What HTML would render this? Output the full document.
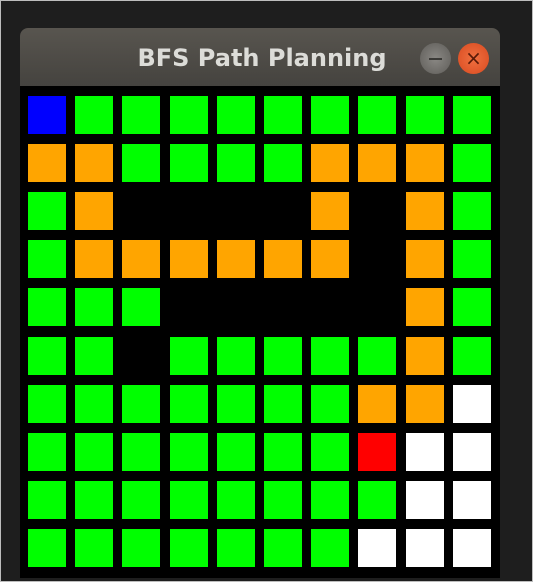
<html><head><style>
body{margin:0;width:533px;height:582px;background:#1e1e1e;position:relative;overflow:hidden;font-family:"DejaVu Sans","Liberation Sans",sans-serif}
.frame{position:absolute;left:0;top:0;width:531px;height:580px;border:1px solid #bdbdbd}
.win{position:absolute;left:20px;top:28px;width:480px;height:550px;background:#000;border-radius:8px 8px 0 0;overflow:hidden}
.tb{height:58px;background:linear-gradient(#58554f,#45433f);position:relative}
.t{position:absolute;left:2px;width:480px;text-align:center;top:16px;color:#dcdcd8;font-weight:bold;font-size:24px}
.b{position:absolute;top:15px;width:31px;height:31px;border-radius:50%}
.c{position:absolute;width:38px;height:38px}
</style></head><body>
<div class="frame"></div>
<div class="win"><div class="tb"><div class="t">BFS Path Planning</div>
<div class="b" style="left:400px;background:radial-gradient(#8a8884,#5e5c58)"><div style="position:absolute;left:9px;top:15px;width:13px;height:2px;background:#3a3936"></div></div>
<div class="b" style="left:438px;background:radial-gradient(#f07040,#d84a20);color:#5a1a08;font-size:20px;text-align:center;line-height:31px">×</div>
</div></div>
<div id="g"></div>
<script>
var m=["BGGGGGGGGG","OOGGGGOOOG","GOKKKKOKOG","GOOOOOOKOG","GGGKKKKKOG","GGKGGGGGOG","GGGGGGGOOW","GGGGGGGRWW","GGGGGGGGWW","GGGGGGGWWW"];
var col={B:"#0000ff",G:"#00ff00",O:"#ffa500",W:"#ffffff",R:"#ff0000",K:"#000"};
var h="";for(var r=0;r<10;r++)for(var c=0;c<10;c++){var k=m[r][c];if(k=="K")continue;
h+='<div class="c" style="left:'+Math.round(28+c*47.2)+'px;top:'+Math.round(96+r*48.1)+'px;background:'+col[k]+'"></div>';}
document.getElementById("g").innerHTML=h;
</script>
</body></html>
